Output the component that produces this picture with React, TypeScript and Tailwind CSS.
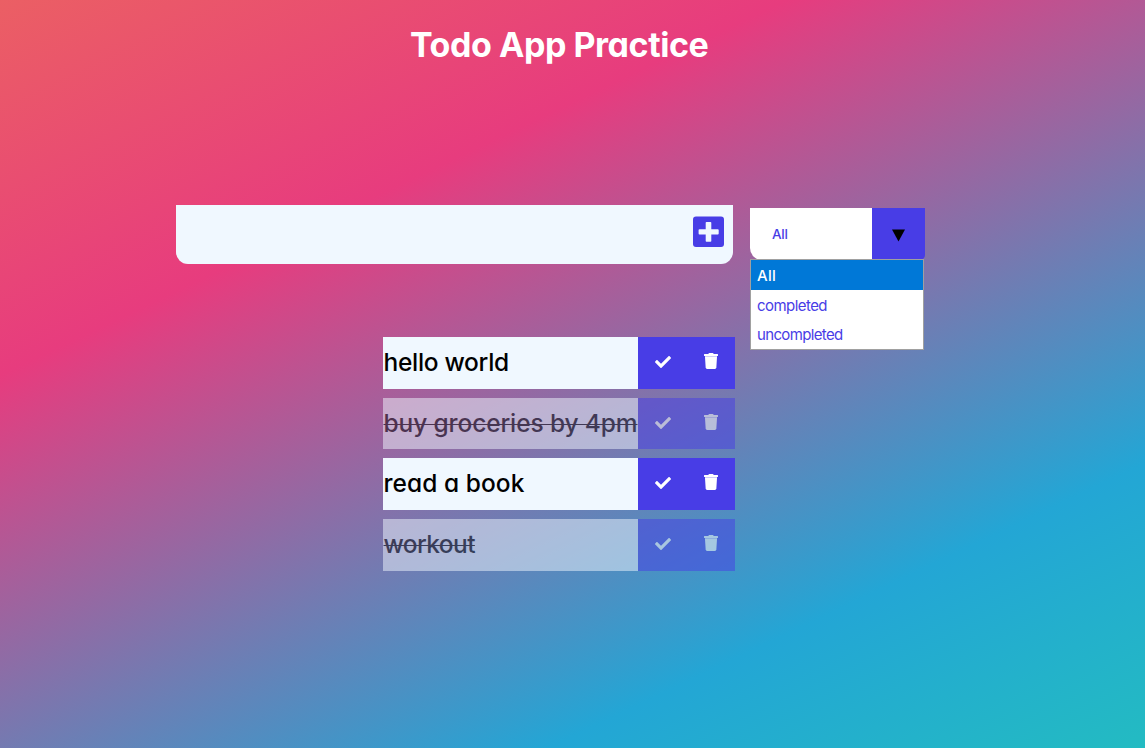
import React from "react";

const todos = [
  { text: "hello world", done: false, box: "h-[52px] mb-[9px]", spacing: "tracking-[-0.3px]" },
  { text: "buy groceries by 4pm", done: true, box: "h-[51px] mb-[9px]", spacing: "tracking-[-0.12px]" },
  { text: "read a book", done: false, box: "h-[52px] mb-[9px]", spacing: "tracking-[0.05px]" },
  { text: "workout", done: true, box: "h-[52px]", spacing: "tracking-[-0.6px]" },
];

function Check() {
  return (
    <svg viewBox="0 0 512 512" className="mt-[0.5px] h-4 w-4 fill-white">
      <path d="M173.898 439.404l-166.4-166.4c-9.997-9.997-9.997-26.206 0-36.204l36.203-36.204c9.997-9.998 26.207-9.998 36.204 0L192 312.69 432.095 72.596c9.997-9.997 26.207-9.997 36.204 0l36.203 36.204c9.997 9.997 9.997 26.206 0 36.204l-294.4 294.401c-9.998 9.997-26.207 9.997-36.204-.001z" />
    </svg>
  );
}

function Trash() {
  return (
    <svg viewBox="0 0 14 16" className="h-4 w-[14px] fill-white">
      <path d="M.5 1h3.750l.3-.6Q4.800 0 5.200 0h3.600q.4 0 .65.400l.3.600h3.750q.5 0 .5.500v1q0 .5-.5.500H.5Q0 3 0 2.500v-1Q0 1 .5 1z" />
      <path d="M1 3h12v.7H1z" fillOpacity=".7" />
      <path d="M1 3.600h12l-.65 11q-.1 1.400-1.500 1.400h-7.700q-1.400 0-1.500-1.400z" />
    </svg>
  );
}

export default function App() {
  return (
    <div className="flex h-[748px] w-[1145px] flex-col overflow-hidden bg-[linear-gradient(154.5deg,#eb5f64_0%,#e73c7e_29%,#23a6d5_78%,#23bbc2_100%)] font-['Inter','Noto_Sans',sans-serif] [font-feature-settings:'cv11']">
      <h1 className="ml-[410px] mt-[22px] h-[46px] whitespace-nowrap text-[34px] font-bold leading-[46px] tracking-[-0.45px] text-white">
        Todo App Practice
      </h1>

      <div className="ml-[176px] mt-[137px] flex h-[59px] items-start">
        <div className="flex h-[59px] w-[557px] items-start justify-end rounded-b-[12px] bg-[#f0f8ff] pr-[9px] pt-[11px]">
          <svg viewBox="0 0 31 31" className="h-[31px] w-[31px]">
            <rect y=".4" width="31" height="30.600" rx="3" fill="#483de6" />
            <path d="M13.500 6h4q.8 0 .8.800v6.400h6.500q.9 0 .9.900v3.500q0 .9-.9.900h-6.500v6.400q0 .8-.8.800h-4q-.8 0-.8-.8v-6.400H6.500q-.9 0-.9-.9v-3.500q0-.9.900-.9h6.200V6.800q0-.8.800-.8z" fill="#f0f8ff" />
          </svg>
        </div>
        <div className="relative ml-[17px] mt-[3px] flex h-[52px] w-[175px]">
          <div className="flex w-[122px] items-center rounded-bl-[12px] bg-white pl-[22px] text-[13.500px] font-medium tracking-[-0.2px] text-[#483de6]">All</div>
          <div className="flex w-[53px] items-center justify-center rounded-br-[5px] bg-[#483de6]">
            <svg viewBox="0 0 13 13" className="mt-[3px] h-[13px] w-[13px]">
              <path d="M0 .5h13L6.500 12.500z" />
            </svg>
          </div>
          <div className="absolute left-0 top-[51px] h-[91px] w-[174px] border border-[#a0a0a0] bg-white text-[15px] leading-[30px] text-[#483de6]">
            <div className="h-[30px] bg-[#0078d7] pl-[6px] font-medium leading-[31px] tracking-[0.3px] text-white">All</div>
            <div className="h-[30px] pl-[6px] leading-[32px] tracking-[-0.55px]">completed</div>
            <div className="h-[29px] pl-[6px] leading-[29px] tracking-[-0.65px]">uncompleted</div>
          </div>
        </div>
      </div>

      <ul className="ml-[383px] mt-[73px] w-[352px]">
        {todos.map((t) => (
          <li key={t.text} className={`flex ${t.box} ${t.done ? "opacity-50" : ""}`}>
            <div className={`w-[255px] whitespace-nowrap bg-[#f0f8ff] pl-[0.5px] text-[24.500px] font-medium leading-[51px] text-black ${t.spacing}`}>
              <span className={t.done ? "line-through decoration-1" : ""}>{t.text}</span>
            </div>
            <div className="flex w-[97px] bg-[#483de6] pt-[16px]">
              <div className="flex w-[49px] justify-center"><Check /></div>
              <div className="flex w-[48px] justify-center"><Trash /></div>
            </div>
          </li>
        ))}
      </ul>
    </div>
  );
}
